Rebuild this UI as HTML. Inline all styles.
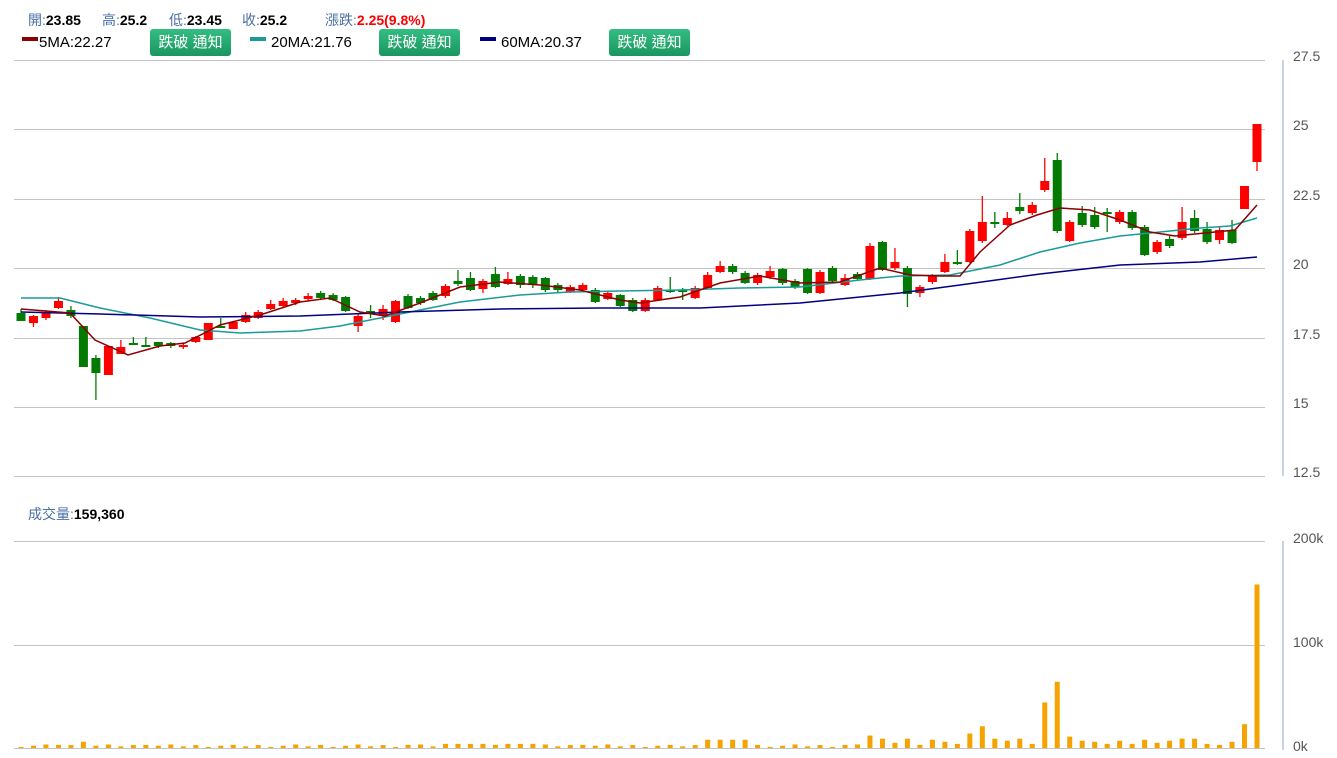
<!DOCTYPE html>
<html><head><meta charset="utf-8"><style>
body{margin:0;background:#fff;width:1337px;height:758px;overflow:hidden;font-family:"Liberation Sans","Noto Sans CJK TC",sans-serif;position:relative}
.t{position:absolute;font-size:14px;white-space:nowrap}
.l{color:#4a6fa5}.b{font-weight:bold;color:#000}
.btn{position:absolute;top:29px;height:27px;width:81px;background:linear-gradient(#34bd82,#1a9660);border-radius:3px;color:#fff;font-size:15px;line-height:27px;text-align:center;font-family:"Liberation Sans","Noto Sans CJK TC",sans-serif}
.ax{position:absolute;left:1293px;font-size:14px;color:#555}
</style></head><body>
<div class="t" style="left:28px;top:10px"><span class="l">開:</span><span class="b">23.85</span></div>
<div class="t" style="left:102px;top:10px"><span class="l">高:</span><span class="b">25.2</span></div>
<div class="t" style="left:169px;top:10px"><span class="l">低:</span><span class="b">23.45</span></div>
<div class="t" style="left:242px;top:10px"><span class="l">收:</span><span class="b">25.2</span></div>
<div class="t" style="left:325px;top:10px"><span class="l">漲跌:</span><span class="b" style="color:#f00">2.25(9.8%)</span></div>
<div style="position:absolute;left:22px;top:37px;width:16px;height:4px;background:#8b0000"></div>
<div class="t" style="left:39px;top:34px;font-size:15px">5MA:22.27</div>
<div class="btn" style="left:150px">跌破 通知</div>
<div style="position:absolute;left:250px;top:37px;width:16px;height:4px;background:#1a9a9a"></div>
<div class="t" style="left:271px;top:34px;font-size:15px">20MA:21.76</div>
<div class="btn" style="left:379px">跌破 通知</div>
<div style="position:absolute;left:480px;top:37px;width:16px;height:4px;background:#000080"></div>
<div class="t" style="left:501px;top:34px;font-size:15px">60MA:20.37</div>
<div class="btn" style="left:609px">跌破 通知</div>
<div class="t" style="left:28px;top:504px"><span class="l">成交量:</span><span class="b">159,360</span></div>
<div class="ax" style="top:48px">27.5</div><div class="ax" style="top:117px">25</div><div class="ax" style="top:187px">22.5</div><div class="ax" style="top:256px">20</div><div class="ax" style="top:326px">17.5</div><div class="ax" style="top:395px">15</div><div class="ax" style="top:464px">12.5</div>
<div class="ax" style="top:530px">200k</div><div class="ax" style="top:634px">100k</div><div class="ax" style="top:738px">0k</div>
<svg id="s" width="1337" height="758" style="position:absolute;left:0;top:0"></svg>
<script>
var s='';
[60,129,199,268,338,407,476,541,645,748].forEach(function(y){s+='<line x1="14" x2="1265" y1="'+y+'.5" y2="'+y+'.5" stroke="#c4c4c4"/>';});
s+='<line x1="1283" x2="1283" y1="60" y2="476" stroke="#c5d5e8" stroke-width="2"/><line x1="1283" x2="1283" y1="541" y2="750" stroke="#c5d5e8" stroke-width="2"/>';
var c=[[313,321,309,321,'g'],[316,323,315,327,'r'],[313,318,310,320,'r'],[301,308,297,309,'r'],[310,316,306,318,'g'],[326,367,326,367,'g'],[358,373,355,400,'g'],[346,375,346,375,'r'],[347,354,340,354,'r'],[343,345,337,345,'g'],[345,347,337,347,'g'],[342,346,342,348,'g'],[343,346,342,348,'g'],[345,347,343,349,'r'],[337,342,336,343,'r'],[323,340,323,340,'r'],[326,327,318,327,'g'],[322,329,322,329,'r'],[315,322,312,323,'r'],[312,318,310,319,'r'],[304,309,300,310,'r'],[301,306,298,307,'r'],[300,303,298,305,'r'],[296,299,293,301,'r'],[293,298,291,299,'g'],[295,300,293,301,'g'],[297,311,296,312,'g'],[316,326,314,332,'r'],[311,314,305,318,'g'],[309,316,305,320,'r'],[301,322,300,323,'r'],[296,308,294,309,'g'],[298,303,296,305,'g'],[293,300,291,301,'g'],[286,296,284,298,'r'],[281,284,270,286,'g'],[278,290,272,291,'g'],[281,289,279,293,'r'],[274,287,267,288,'g'],[279,284,272,285,'r'],[276,285,274,288,'g'],[277,285,275,288,'g'],[278,290,277,292,'g'],[285,290,283,292,'g'],[287,292,285,293,'r'],[285,290,283,292,'r'],[290,302,288,303,'g'],[293,299,291,300,'r'],[295,306,294,307,'g'],[300,311,298,312,'g'],[300,311,298,312,'r'],[288,300,286,301,'r'],[290,292,277,293,'g'],[290,292,288,300,'g'],[288,298,286,299,'r'],[275,288,272,289,'r'],[266,272,261,273,'r'],[266,272,264,274,'g'],[273,283,271,284,'g'],[275,283,273,285,'r'],[271,277,266,279,'r'],[269,283,268,285,'g'],[281,287,279,289,'g'],[269,293,268,294,'g'],[272,293,270,294,'r'],[268,281,266,282,'g'],[278,285,274,286,'r'],[274,279,272,280,'g'],[246,279,243,280,'r'],[242,270,241,271,'g'],[262,268,248,270,'r'],[268,294,266,307,'g'],[287,293,285,297,'r'],[276,282,274,284,'r'],[262,272,254,273,'r'],[262,264,250,265,'g'],[231,262,229,263,'r'],[222,241,196,243,'r'],[222,224,212,228,'g'],[218,225,212,226,'r'],[207,211,193,214,'g'],[205,213,202,215,'r'],[181,190,158,192,'r'],[160,231,153,233,'g'],[222,241,220,242,'r'],[213,225,206,227,'g'],[215,227,207,229,'g'],[212,214,208,232,'g'],[212,222,210,224,'r'],[212,228,210,230,'g'],[227,255,225,256,'g'],[242,252,240,254,'r'],[239,246,236,248,'g'],[222,238,207,240,'r'],[218,231,210,233,'g'],[229,242,222,244,'g'],[230,240,227,244,'r'],[230,243,220,244,'g'],[186,209,186,209,'r'],[124,162,124,171,'r']];
var step=(1257-21)/(c.length-1);
c.forEach(function(d,i){var x=21+i*step,col=d[4]=='r'?'#ff0000':'#037b03';var top=Math.min(d[0],d[1]),h=Math.max(2,Math.abs(d[1]-d[0]));
s+='<line x1="'+x+'" x2="'+x+'" y1="'+d[2]+'" y2="'+d[3]+'" stroke="'+col+'" stroke-width="1.3"/><rect x="'+(x-4.5)+'" y="'+top+'" width="9" height="'+h+'" fill="'+col+'"/>';
var v=2;if(i>=68)v=[12,9,5,9,3,8,6,4,14,21,9,7,9,4,44,64,11,7,6,4,7,4,8,5,7,9,9,4,3,6,23,158][i-68]||5;else if(i==5)v=6;else if(i%7==3)v=3;else if(i>=34&&i<42)v=4;else if(i>=55&&i<60)v=8;else v=1+(i*37%5)*0.6;
if(i==98)v=23;if(i==99)v=158;var vh=v*1.035;
s+='<rect x="'+(x-2.5)+'" y="'+(748-vh)+'" width="5" height="'+vh+'" fill="#f5a300"/>';});
function pl(p,col){s+='<polyline fill="none" stroke="'+col+'" stroke-width="1.5" points="'+p+'"/>';}
pl('21,298 60,298 100,308 150,318 200,330 240,333 300,331 340,326 380,318 420,310 460,302 520,295 570,292 620,291 680,290 740,288 800,287 860,280 900,276 950,275 1000,265 1040,252 1080,243 1120,236 1160,232 1200,228 1230,226 1257,218','#1a9a9a');
pl('21,312 100,314 200,317 300,316 400,312 500,309 600,308 700,308 800,303 900,293 960,285 1040,274 1120,265 1200,262 1257,257','#000080');
pl('21,309 70,313 95,340 128,355 160,346 185,343 220,325 260,315 300,302 330,298 360,312 385,316 420,303 460,287 500,282 540,285 580,290 620,300 640,303 680,297 720,283 760,276 800,283 840,282 880,268 910,275 940,276 960,276 980,252 1010,225 1037,215 1060,208 1090,210 1120,220 1150,232 1175,236 1205,233 1235,230 1257,205','#8b0000');
document.getElementById('s').innerHTML=s;
</script>
</body></html>
